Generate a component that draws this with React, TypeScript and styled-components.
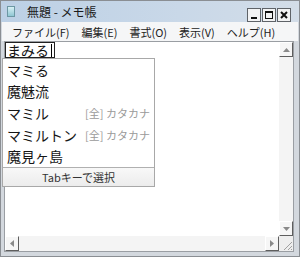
import styled, { createGlobalStyle } from "styled-components";

const Global = createGlobalStyle`
  html, body { margin: 0; padding: 0; }
  body {
    width: 300px;
    height: 257px;
    overflow: hidden;
    font-family: "Noto Sans CJK JP", "Liberation Sans", sans-serif;
  }
`;

const Frame = styled.div`
  width: 300px;
  height: 257px;
  box-sizing: border-box;
  background: #d3d8de;
  border: 1px solid #8a8e93;
  padding: 0 5px 4px 3px;
  display: flex;
  flex-direction: column;
`;

const TitleBar = styled.div`
  height: 21px;
  margin: 0 -5px 0 -3px;
  padding: 0 8px 0 6px;
  display: flex;
  align-items: center;
  gap: 12px;
  background: linear-gradient(90deg, #bcd0e5 0%, #c9d8e8 60%, #d3dde8 100%);
`;

const AppIcon = styled.div`
  width: 6px;
  height: 9px;
  background: linear-gradient(180deg, #d8f0f4, #8fc7d3);
  border: 1px solid #6c97a3;
`;

const Title = styled.span`
  font-size: 12px;
  color: #1a1a1a;
  flex: 1;
`;

const WinButtons = styled.div`
  display: flex;
  gap: 1px;
  align-self: flex-end;
  margin-bottom: 0;
`;

const WinButton = styled.div`
  width: 12px;
  height: 12px;
  background: #f2f3f4;
  border: 1px solid #5f6368;
  display: flex;
  align-items: center;
  justify-content: center;
`;

const MenuBar = styled.div`
  height: 19px;
  margin: 0 -4px 0 -2px;
  padding-left: 10px;
  display: flex;
  align-items: center;
  gap: 12px;
  background: #f5f6f7;
  font-size: 11px;
  color: #222;
`;

const Body = styled.div`
  flex: 1;
  display: flex;
  flex-direction: column;
  background: #fff;
  border: 1px solid #9a9ea3;
`;

const Main = styled.div`
  flex: 1;
  display: flex;
`;

const EditArea = styled.div`
  flex: 1;
  position: relative;
  display: flex;
  flex-direction: column;
  align-items: flex-start;
`;

const Composition = styled.span`
  display: inline-flex;
  align-items: center;
  height: 14px;
  padding: 0 2px 0 1px;
  border: 1px solid #222;
  font-size: 14px;
  line-height: 14px;
  color: #111;
`;

const Caret = styled.span`
  width: 1px;
  height: 13px;
  margin-left: 2px;
  background: #000;
`;

const Popup = styled.div`
  position: absolute;
  left: -3px;
  top: 16px;
  width: 151px;
  background: #fff;
  border: 1px solid #a8a8a8;
  display: flex;
  flex-direction: column;
`;

const Candidate = styled.div`
  height: 21.6px;
  display: flex;
  align-items: center;
  padding-left: 4px;
  font-size: 14px;
  color: #161616;
`;

const Word = styled.span`
  width: 78px;
`;

const Note = styled.span`
  font-size: 11px;
  color: #9a9a9a;
`;

const PopupFooter = styled.div`
  height: 18px;
  border-top: 1px solid #b0b0b0;
  background: linear-gradient(180deg, #f8f8f8, #ececec);
  display: flex;
  align-items: center;
  justify-content: center;
  font-size: 11px;
  color: #333;
`;

const VScroll = styled.div`
  width: 14px;
  background: #f4f4f4;
  display: flex;
  flex-direction: column;
  justify-content: space-between;
`;

const HRow = styled.div`
  height: 15px;
  display: flex;
`;

const HScroll = styled.div`
  flex: 1;
  background: #f4f4f4;
  display: flex;
  justify-content: space-between;
`;

const ArrowBox = styled.div`
  width: 14px;
  height: 15px;
  box-sizing: border-box;
  background: #f6f6f6;
  border-right: 1px solid #5e5e5e;
  border-bottom: 1px solid #5e5e5e;
  border-top: 1px solid #fff;
  border-left: 1px solid #fff;
  display: flex;
  align-items: center;
  justify-content: center;
`;

const Grip = styled.div`
  width: 14px;
  background: #eeeeee;
  display: flex;
  align-items: flex-end;
  justify-content: flex-end;
`;

const Tri = ({ dir }: { dir: "up" | "down" | "left" | "right" }) => {
  const pts = {
    up: "0,4 3.5,0 7,4",
    down: "0,0 7,0 3.5,4",
    left: "4,0 4,7 0,3.5",
    right: "0,0 0,7 4,3.5",
  }[dir];
  const vertical = dir === "up" || dir === "down";
  return (
    <svg width={vertical ? 7 : 4} height={vertical ? 4 : 7}>
      <polygon points={pts} fill="#8a8a8a" />
    </svg>
  );
};

const candidates = [
  { word: "マミる" },
  { word: "魔魅流" },
  { word: "マミル", note: "[全] カタカナ" },
  { word: "マミルトン", note: "[全] カタカナ" },
  { word: "魔見ヶ島" },
];

const menus = ["ファイル(F)", "編集(E)", "書式(O)", "表示(V)", "ヘルプ(H)"];

export default function App() {
  return (
    <>
      <Global />
      <Frame>
        <TitleBar>
          <AppIcon />
          <Title>無題 - メモ帳</Title>
          <WinButtons>
            <WinButton>
              <svg width="8" height="8">
                <rect x="1" y="6" width="6" height="2" fill="#111" />
              </svg>
            </WinButton>
            <WinButton>
              <svg width="8" height="8">
                <rect x="0.5" y="0.5" width="7" height="7" fill="none" stroke="#111" />
                <rect x="0.5" y="0.5" width="7" height="1.5" fill="#111" />
              </svg>
            </WinButton>
            <WinButton>
              <svg width="8" height="8">
                <path d="M1 1 L7 7 M7 1 L1 7" stroke="#111" strokeWidth="2" />
              </svg>
            </WinButton>
          </WinButtons>
        </TitleBar>
        <MenuBar>
          {menus.map((m) => (
            <span key={m}>{m}</span>
          ))}
        </MenuBar>
        <Body>
          <Main>
            <EditArea>
              <Composition>
                まみる
                <Caret />
              </Composition>
              <Popup>
                {candidates.map((c) => (
                  <Candidate key={c.word}>
                    <Word>{c.word}</Word>
                    {c.note && <Note>{c.note}</Note>}
                  </Candidate>
                ))}
                <PopupFooter>Tabキーで選択</PopupFooter>
              </Popup>
            </EditArea>
            <VScroll>
              <ArrowBox>
                <Tri dir="up" />
              </ArrowBox>
              <ArrowBox>
                <Tri dir="down" />
              </ArrowBox>
            </VScroll>
          </Main>
          <HRow>
            <HScroll>
              <ArrowBox>
                <Tri dir="left" />
              </ArrowBox>
              <ArrowBox>
                <Tri dir="right" />
              </ArrowBox>
            </HScroll>
            <Grip>
              <svg width="12" height="12">
                <path d="M11 3 L3 11 M11 7 L7 11 M11 10 L10 11" stroke="#a0a0a0" />
              </svg>
            </Grip>
          </HRow>
        </Body>
      </Frame>
    </>
  );
}
